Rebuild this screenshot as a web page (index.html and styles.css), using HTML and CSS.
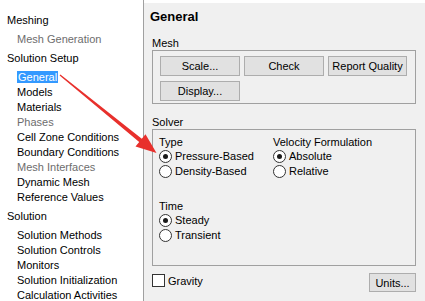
FILE: index.html
```html
<!DOCTYPE html>
<html lang="en">
<head>
  <meta charset="UTF-8">
  <title>General - Solution Setup</title>
  <link rel="stylesheet" href="styles.css">
</head>
<body>

  <div class="tree">
    <div class="group">
      <div class="heading">Meshing</div>
      <div class="item disabled">Mesh Generation</div>
    </div>
    <div class="group">
      <div class="heading">Solution Setup</div>
      <div class="item"><span class="selected">General</span></div>
      <div class="item">Models</div>
      <div class="item">Materials</div>
      <div class="item disabled">Phases</div>
      <div class="item">Cell Zone Conditions</div>
      <div class="item">Boundary Conditions</div>
      <div class="item disabled">Mesh Interfaces</div>
      <div class="item">Dynamic Mesh</div>
      <div class="item">Reference Values</div>
    </div>
    <div class="group">
      <div class="heading">Solution</div>
      <div class="item">Solution Methods</div>
      <div class="item">Solution Controls</div>
      <div class="item">Monitors</div>
      <div class="item">Solution Initialization</div>
      <div class="item">Calculation Activities</div>
    </div>
  </div>

  <div class="panel">
    <div class="panel-title">General</div>

    <div class="box-label">Mesh</div>
    <div class="box mesh">
      <button>Scale...</button>
      <button>Check</button>
      <button>Report Quality</button>
      <button>Display...</button>
    </div>

    <div class="box-label solver-label">Solver</div>
    <div class="box solver">
      <div class="col">
        <div class="opt-title">Type</div>
        <div class="opt"><span class="radio checked"></span>Pressure-Based</div>
        <div class="opt"><span class="radio"></span>Density-Based</div>
        <div class="opt-title time">Time</div>
        <div class="opt"><span class="radio checked"></span>Steady</div>
        <div class="opt"><span class="radio"></span>Transient</div>
      </div>
      <div class="col">
        <div class="opt-title">Velocity Formulation</div>
        <div class="opt"><span class="radio checked"></span>Absolute</div>
        <div class="opt"><span class="radio"></span>Relative</div>
      </div>
    </div>

    <div class="bottom">
      <div class="check"><span class="checkbox"></span>Gravity</div>
      <button class="units">Units...</button>
    </div>
  </div>

  <!-- red annotation arrow -->
  <svg class="arrow" width="425" height="301" viewBox="0 0 425 301">
    <polygon points="60.4,74.5 141.8,138.8 145.5,134.2 156.5,153 135.5,146.6 139.2,142 59.6,75.5" fill="#e8302c"/>
  </svg>

</body>
</html>
```

FILE: styles.css
```css
body {
  margin: 0;
  width: 425px;
  height: 301px;
  overflow: hidden;
  display: flex;
  background: #fff;
  font-family: 'Liberation Sans', Arial, sans-serif;
  font-size: 11px;
  color: #000;
  position: relative;
}

/* Navigation tree on the left */
.tree {
  width: 143px;
  padding-top: 12.5px;
  border-right: 1px solid #a0a0a0;
  box-sizing: border-box;
  flex-shrink: 0;
  width: 144px;
}

.group {
  margin-bottom: 4px;
}

.heading {
  line-height: 15px;
  padding-left: 7px;
  margin-bottom: 4px;
}

.item {
  line-height: 15px;
  padding-left: 17px;
  white-space: nowrap;
}

.item.disabled {
  color: #6d6d6d;
}

.selected {
  background: #3399ff;
  color: #fff;
  padding: 0 1px;
}

/* Task page */
.panel {
  flex: 1;
  margin-top: 3px;
  background: #f0f0f0;
  padding: 0 9px 0 8px;
}

.panel-title {
  font-weight: bold;
  font-size: 13px;
  line-height: 20px;
  padding-top: 4px;
  padding-left: -2px;
  margin-left: -2px;
}

.box-label {
  line-height: 14px;
  margin-top: 9px;
}

.solver-label {
  margin-top: 11px;
}

.box {
  border: 1px solid #a0a0a0;
}

.mesh {
  padding: 5px 7px 2px;
  display: grid;
  grid-template-columns: 80px 80px 79px;
  column-gap: 4px;
  row-gap: 5px;
}

button {
  height: 20px;
  background: #e1e1e1;
  border: 1px solid #adadad;
  font-family: inherit;
  font-size: 11px;
  color: #000;
  padding: 0;
  white-space: nowrap;
}

.solver {
  padding: 6px 6px 22px;
  display: grid;
  grid-template-columns: 114px auto;
}

.opt-title {
  line-height: 13px;
}

.opt-title.time {
  margin-top: 21px;
}

.opt {
  line-height: 15px;
  display: flex;
  align-items: center;
  white-space: nowrap;
}

.radio {
  width: 11px;
  height: 11px;
  border: 1px solid #333;
  border-radius: 50%;
  background: #fff;
  margin-right: 3px;
  position: relative;
  flex-shrink: 0;
}

.radio.checked::after {
  content: "";
  position: absolute;
  left: 3px;
  top: 3px;
  width: 5px;
  height: 5px;
  border-radius: 50%;
  background: #1a1a1a;
}

.bottom {
  margin-top: 7px;
  display: flex;
  justify-content: space-between;
  align-items: flex-start;
}

.check {
  display: flex;
  align-items: center;
  margin-top: 1px;
}

.checkbox {
  width: 11px;
  height: 11px;
  border: 1px solid #333;
  background: #fff;
  margin-right: 3px;
}

.units {
  width: 47px;
  height: 19px;
}

.arrow {
  position: absolute;
  left: 0;
  top: 0;
  pointer-events: none;
}
```
